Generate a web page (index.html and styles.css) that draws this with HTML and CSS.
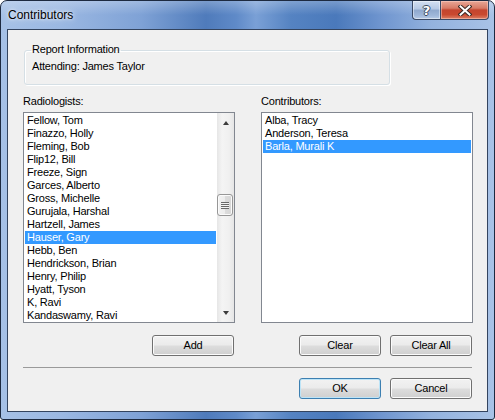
FILE: index.html
```html
<!DOCTYPE html>
<html>
<head>
<meta charset="utf-8">
<title>Contributors</title>
<link rel="stylesheet" href="styles.css">
</head>
<body>
<div class="window">
  <div class="titlebar">
    <span class="title">Contributors</span>
    <div class="caption-buttons">
      <div class="cbtn help"><span class="qmark">?</span></div>
      <div class="cbtn close">
        <svg width="14" height="11" viewBox="0 0 14 11">
          <path d="M2.5 1.5 L11.5 9.5 M11.5 1.5 L2.5 9.5" stroke="#3b2a25" stroke-width="4" stroke-linecap="square" fill="none"/>
          <path d="M2.5 1.5 L11.5 9.5 M11.5 1.5 L2.5 9.5" stroke="#ffffff" stroke-width="2" stroke-linecap="square" fill="none"/>
        </svg>
      </div>
    </div>
  </div>
  <div class="client">
    <fieldset class="group">
      <legend>Report Information</legend>
      <div class="attending">Attending: James Taylor</div>
    </fieldset>
    <div class="lists">
      <div class="col">
        <div class="label">Radiologists:</div>
        <div class="listbox">
          <ul class="items">
            <li>Fellow, Tom</li>
            <li>Finazzo, Holly</li>
            <li>Fleming, Bob</li>
            <li>Flip12, Bill</li>
            <li>Freeze, Sign</li>
            <li>Garces, Alberto</li>
            <li>Gross, Michelle</li>
            <li>Gurujala, Harshal</li>
            <li>Hartzell, James</li>
            <li class="sel">Hauser, Gary</li>
            <li>Hebb, Ben</li>
            <li>Hendrickson, Brian</li>
            <li>Henry, Philip</li>
            <li>Hyatt, Tyson</li>
            <li>K, Ravi</li>
            <li>Kandaswamy, Ravi</li>
          </ul>
          <div class="scrollbar">
            <div class="sb-arrow"><span class="tri up"></span></div>
            <div class="sb-track">
              <div class="sb-thumb"><span class="grip"></span></div>
            </div>
            <div class="sb-arrow"><span class="tri down"></span></div>
          </div>
        </div>
        <div class="btnrow">
          <button class="btn">Add</button>
        </div>
      </div>
      <div class="col">
        <div class="label">Contributors:</div>
        <div class="listbox">
          <ul class="items">
            <li>Alba, Tracy</li>
            <li>Anderson, Teresa</li>
            <li class="sel">Barla, Murali K</li>
          </ul>
        </div>
        <div class="btnrow">
          <button class="btn">Clear</button>
          <button class="btn">Clear All</button>
        </div>
      </div>
    </div>
    <div class="sep"></div>
    <div class="btnrow bottom">
      <button class="btn default">OK</button>
      <button class="btn">Cancel</button>
    </div>
  </div>
</div>
</body>
</html>
```
FILE: styles.css
```css
* { box-sizing: border-box; }
html, body { margin: 0; padding: 0; }
body {
  width: 495px;
  height: 420px;
  overflow: hidden;
  background: #ffffff;
  font-family: "Liberation Sans", Arial, sans-serif;
  font-size: 11px;
  letter-spacing: -0.2px;
  color: #000;
}
.window {
  width: 495px;
  height: 420px;
  border: 1px solid #1d2a40;
  border-radius: 7px 7px 3px 3px;
  overflow: hidden;
  display: flex;
  flex-direction: column;
  background:
    linear-gradient(180deg, rgba(255,255,255,0.25) 0px, rgba(255,255,255,0) 14px),
    linear-gradient(90deg, #a6c1e6 0px, #9bb8e2 60px, #7fa2d6 140px, #4f7bbb 205px, #5f8ac8 235px, #7aa0d6 255px, #5583c2 290px, #4a79bb 335px, #6f95cf 380px, #93b2de 430px, #a9c3e7 495px);
}
.titlebar {
  height: 28px;
  display: flex;
  align-items: flex-start;
  padding-left: 7px;
}
.title {
  margin-top: 7px;
  font-size: 12px;
  line-height: 14px;
  letter-spacing: 0;
  color: #000;
  text-shadow: 0 0 6px rgba(255,255,255,0.9), 0 0 3px rgba(255,255,255,0.8);
}
.caption-buttons {
  margin-left: auto;
  margin-right: 5px;
  display: flex;
  height: 19px;
}
.cbtn {
  height: 19px;
  border: 1px solid #3a4a66;
  border-top: none;
  display: flex;
  align-items: center;
  justify-content: center;
}
.help {
  width: 28px;
  border-right: none;
  border-radius: 0 0 0 4px;
  background: linear-gradient(180deg, #d3e0f2 0%, #b5c8e4 45%, #8fa8cd 50%, #9fb7da 80%, #b8cbe6 100%);
  box-shadow: inset 0 0 0 1px rgba(255,255,255,0.45);
}
.qmark {
  font-family: "DejaVu Sans", sans-serif;
  font-weight: bold;
  font-size: 13px;
  line-height: 13px;
  color: #fff;
  letter-spacing: 0;
  text-shadow: 1px 0 0 #3b4a60, -1px 0 0 #3b4a60, 0 1px 0 #3b4a60, 0 -1px 0 #3b4a60;
}
.close {
  width: 49px;
  border-radius: 0 0 4px 0;
  background: linear-gradient(180deg, #e8a797 0%, #d77b66 40%, #c4452f 50%, #c9492f 75%, #dc8066 100%);
  box-shadow: inset 0 0 0 1px rgba(255,220,210,0.45);
}
.close svg { display: block; }

.client {
  height: 383px;
  margin: 0 6px;
  border: 1px solid #33445f;
  background: #f0f0f0;
  padding: 13px 14px 0 15px;
}
.group {
  margin: 0 0 0 1px;
  width: 366px;
  padding: 2px 6px 11px 6px;
  border: 1px solid #d5dfe5;
  border-radius: 3px;
  box-shadow: 1px 1px 0 #ffffff, inset 1px 1px 0 #ffffff;
}
.group legend {
  padding: 0 1px 2px 1px;
  line-height: 13px;
  font-size: 11px;
}
.attending {
  line-height: 13px;
  margin-left: 1px;
}
.lists {
  margin-top: 10px;
  display: grid;
  grid-template-columns: 212px 212px;
  justify-content: space-between;
}
.label {
  line-height: 13px;
  height: 13px;
}
.listbox {
  margin-top: 4px;
  height: 211px;
  border: 1px solid #828790;
  background: #fff;
  display: flex;
  overflow: hidden;
}
.items {
  list-style: none;
  margin: 0;
  padding: 1px;
  flex: 1;
  min-width: 0;
}
.items li {
  height: 13px;
  line-height: 13px;
  padding-left: 2px;
  white-space: nowrap;
}
.items li.sel {
  background: #3399ff;
  color: #fff;
}
.scrollbar {
  width: 17px;
  flex: none;
  display: flex;
  flex-direction: column;
  background: linear-gradient(90deg, #e6e6e6 0%, #f4f4f4 30%, #f0f0f0 70%, #e6e6e6 100%);
}
.sb-arrow {
  height: 17px;
  display: flex;
  align-items: center;
  justify-content: center;
}
.tri {
  width: 0;
  height: 0;
  border-left: 3.5px solid transparent;
  border-right: 3.5px solid transparent;
}
.tri.up { border-bottom: 4px solid #3d3d3d; margin-top: 2px; }
.tri.down { border-top: 4px solid #3d3d3d; margin-top: -1px; }
.sb-track {
  flex: 1;
  padding-top: 64px;
}
.sb-thumb {
  margin: 0 1px 0 0;
  height: 22px;
  border: 1px solid #979797;
  border-radius: 3px;
  background: linear-gradient(90deg, #f2f2f2 0%, #ececec 50%, #dcdcdc 51%, #d6d6d6 100%);
  box-shadow: inset 0 0 0 1px #fbfbfb;
  display: flex;
  align-items: center;
  justify-content: center;
}
.grip {
  width: 8px;
  height: 7px;
  background: repeating-linear-gradient(180deg, #6a6a6a 0px, #6a6a6a 1px, #f4f4f4 1px, #f4f4f4 2px);
}
.btnrow {
  margin-top: 12px;
  display: flex;
  justify-content: flex-end;
  gap: 9px;
  padding-right: 1px;
}
.btnrow.bottom { margin-top: 10px; }
.btn {
  width: 82px;
  height: 21px;
  padding: 0;
  margin: 0;
  border: 1px solid #707070;
  border-radius: 3px;
  background: linear-gradient(180deg, #f2f2f2 0%, #ebebeb 48%, #dddddd 52%, #cfcfcf 100%);
  box-shadow: inset 0 0 0 1px #fbfbfb;
  font-family: "Liberation Sans", Arial, sans-serif;
  font-size: 11px;
  letter-spacing: -0.2px;
  line-height: 13px;
  color: #000;
}
.btn.default {
  border-color: #3c7fb1;
  box-shadow: inset 0 0 0 1px #bde4f7;
}
.sep {
  margin-top: 11px;
  margin-right: 1px;
  height: 1px;
  background: #9a9a9a;
}
```
